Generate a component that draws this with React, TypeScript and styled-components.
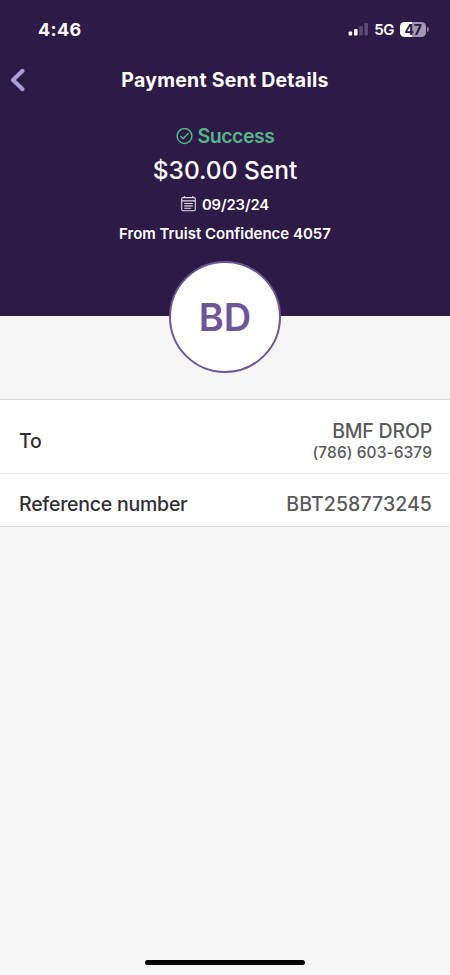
import React, { Component } from 'react';
import styled, { createGlobalStyle } from 'styled-components';

const GlobalStyle = createGlobalStyle`
  body {
    margin: 0;
    background: #f6f6f6;
    font-family: Inter, 'Liberation Sans', sans-serif;
  }
`;

const Screen = styled.div`
  display: flex;
  flex-direction: column;
  width: 450px;
  height: 975px;
  overflow: hidden;
  background: #f6f6f6;
`;

const Header = styled.header`
  display: flex;
  flex-direction: column;
  height: 316px;
  flex-shrink: 0;
  color: #fff;
  background: #2e1a47;
`;

const StatusBar = styled.div`
  display: flex;
  align-items: center;
  justify-content: space-between;
  height: 58px;
  padding: 0 21px 0 38px;
`;

const Time = styled.span`
  font-size: 18px;
  font-weight: 700;
  letter-spacing: 0.35px;
`;

const StatusIcons = styled.div`
  display: flex;
  align-items: center;
`;

const Network = styled.span`
  margin: 1px 6px 0 6px;
  font-size: 15px;
  line-height: 20px;
  font-weight: 600;
  letter-spacing: -0.4px;
`;

const Battery = styled.div`
  display: flex;
  align-items: center;
  justify-content: center;
  width: 26px;
  height: 15px;
  border-radius: 4.5px;
  color: #2e1a47;
  background: linear-gradient(to right, #fff 47%, #a397b0 47%);
  font-size: 14px;
  font-weight: 700;
  letter-spacing: -0.2px;
`;

const BatteryCap = styled.span`
  width: 2px;
  height: 5px;
  margin-left: 1px;
  border-radius: 0 2px 2px 0;
  background: #83759a;
`;

const NavBar = styled.nav`
  display: grid;
  grid-template-columns: 40px 1fr 40px;
  align-items: center;
  height: 44px;
`;

const BackButton = styled.button`
  display: flex;
  padding: 0 0 0 8px;
  border: 0;
  background: none;
`;

const Title = styled.h1`
  margin: 0;
  font-size: 19.5px;
  font-weight: 700;
  line-height: 24px;
  letter-spacing: 0.24px;
  text-align: center;
`;

const Summary = styled.div`
  display: flex;
  flex-direction: column;
  align-items: center;
  padding-top: 20px;
`;

interface LineProps {
  $size: number;
  $height: number;
  $spacing?: number;
  $weight?: number;
}

const Line = styled.div<LineProps>`
  display: flex;
  align-items: center;
  gap: 6px;
  height: ${({ $height }) => $height}px;
  font-size: ${({ $size }) => $size}px;
  font-weight: ${({ $weight = 600 }) => $weight};
  letter-spacing: ${({ $spacing = 0 }) => $spacing}px;
  white-space: nowrap;
`;

const Status = styled(Line)`
  gap: 5px;
  color: #56b487;
`;

const Avatar = styled.div`
  display: flex;
  align-items: center;
  justify-content: center;
  box-sizing: border-box;
  flex-shrink: 0;
  align-self: center;
  width: 112px;
  height: 112px;
  margin-top: -55px;
  border: 2px solid #6f5698;
  border-radius: 50%;
  color: #6f5698;
  background: #fff;
  font-size: 38px;
  font-weight: 600;
`;

const Details = styled.dl`
  margin: 26px 0 0;
  border-top: 1px solid #dcdcdc;
  border-bottom: 1px solid #dcdcdc;
  background: #fff;
`;

const Row = styled.div<{ $height: number }>`
  display: flex;
  align-items: center;
  justify-content: space-between;
  box-sizing: border-box;
  height: ${({ $height }) => $height}px;
  padding: 8px 18px 0 19px;

  & + & {
    border-top: 1px solid #e8e8e8;
  }
`;

const Label = styled.dt`
  color: #2f3035;
  font-size: 19.5px;
  font-weight: 500;
  letter-spacing: -0.24px;
`;

const Value = styled.dd`
  margin: 0;
  color: #5a5a5c;
  font-size: 19.5px;
  font-weight: 500;
  line-height: 24px;
  letter-spacing: 0.08px;
  text-align: right;
`;

const Name = styled.div`
  letter-spacing: -0.2px;
`;

const Phone = styled.div`
  font-size: 15.5px;
  line-height: 20px;
`;

const HomeIndicator = styled.div`
  align-self: center;
  width: 160px;
  height: 5px;
  margin: auto 0 10px;
  border-radius: 3px;
  background: #000;
`;

const SignalIcon = () => (
  <svg width="20" height="13" viewBox="0 0 20 13" fill="#fff">
    <rect x="0.6" y="8.5" width="3.6" height="4" rx="1" />
    <rect x="6" y="6" width="3.6" height="6.5" rx="1" />
    <rect x="11.2" y="3" width="3.6" height="9.5" rx="1" opacity="0.22" />
    <rect x="16.4" y="0" width="3.6" height="12.5" rx="1" opacity="0.22" />
  </svg>
);

const BackIcon = () => (
  <svg width="18" height="26" viewBox="0 0 18 26" fill="none">
    <path d="M14.6 3.8 5 13l9.6 9.2" stroke="#a99fdf" strokeWidth="4" strokeLinecap="round" strokeLinejoin="round" />
  </svg>
);

const CheckIcon = () => (
  <svg width="17" height="17" viewBox="0 0 17 17" fill="none" stroke="#56b487" strokeWidth="1.5">
    <circle cx="8.5" cy="8" r="7.4" />
    <path d="m4.8 8.4 2.4 2.3 4.9-5.2" strokeLinecap="round" strokeLinejoin="round" />
  </svg>
);

const CalendarIcon = () => (
  <svg width="15" height="18" viewBox="0 0 15 18" fill="none" stroke="#e4dcec" strokeWidth="1.1">
    <rect x="0.7" y="1.6" width="13.6" height="13.2" rx="1.5" />
    <path d="M.7 4.9h13.6M3.3 0v2M11.7 0v2M3.2 7.5h8.6M3.2 9.9h8.6M3.2 12.3h7" />
  </svg>
);

class App extends Component {

  public render(): React.JSX.Element {
    return (
      <Screen>
        <GlobalStyle />
        <Header>
          <StatusBar>
            <Time>4:46</Time>
            <StatusIcons>
              <SignalIcon />
              <Network>5G</Network>
              <Battery>47</Battery>
              <BatteryCap />
            </StatusIcons>
          </StatusBar>

          <NavBar>
            <BackButton aria-label="Back"><BackIcon /></BackButton>
            <Title>Payment Sent Details</Title>
          </NavBar>

          <Summary>
            <Status $size={19.5} $height={28} $spacing={-0.5}><CheckIcon />Success</Status>
            <Line $size={24.5} $height={40} $weight={500}>$30.00 Sent</Line>
            <Line $size={14.8} $height={30} $spacing={-0.1}><CalendarIcon />09/23/24</Line>
            <Line $size={15} $height={27}>From Truist Confidence 4057</Line>
          </Summary>
        </Header>

        <Avatar>BD</Avatar>

        <Details>
          <Row $height={73}>
            <Label>To</Label>
            <Value>
              <Name>BMF DROP</Name>
              <Phone>(786) 603-6379</Phone>
            </Value>
          </Row>
          <Row $height={53}>
            <Label>Reference number</Label>
            <Value>BBT258773245</Value>
          </Row>
        </Details>

        <HomeIndicator />
      </Screen>
    );
  }

}

export default App;
